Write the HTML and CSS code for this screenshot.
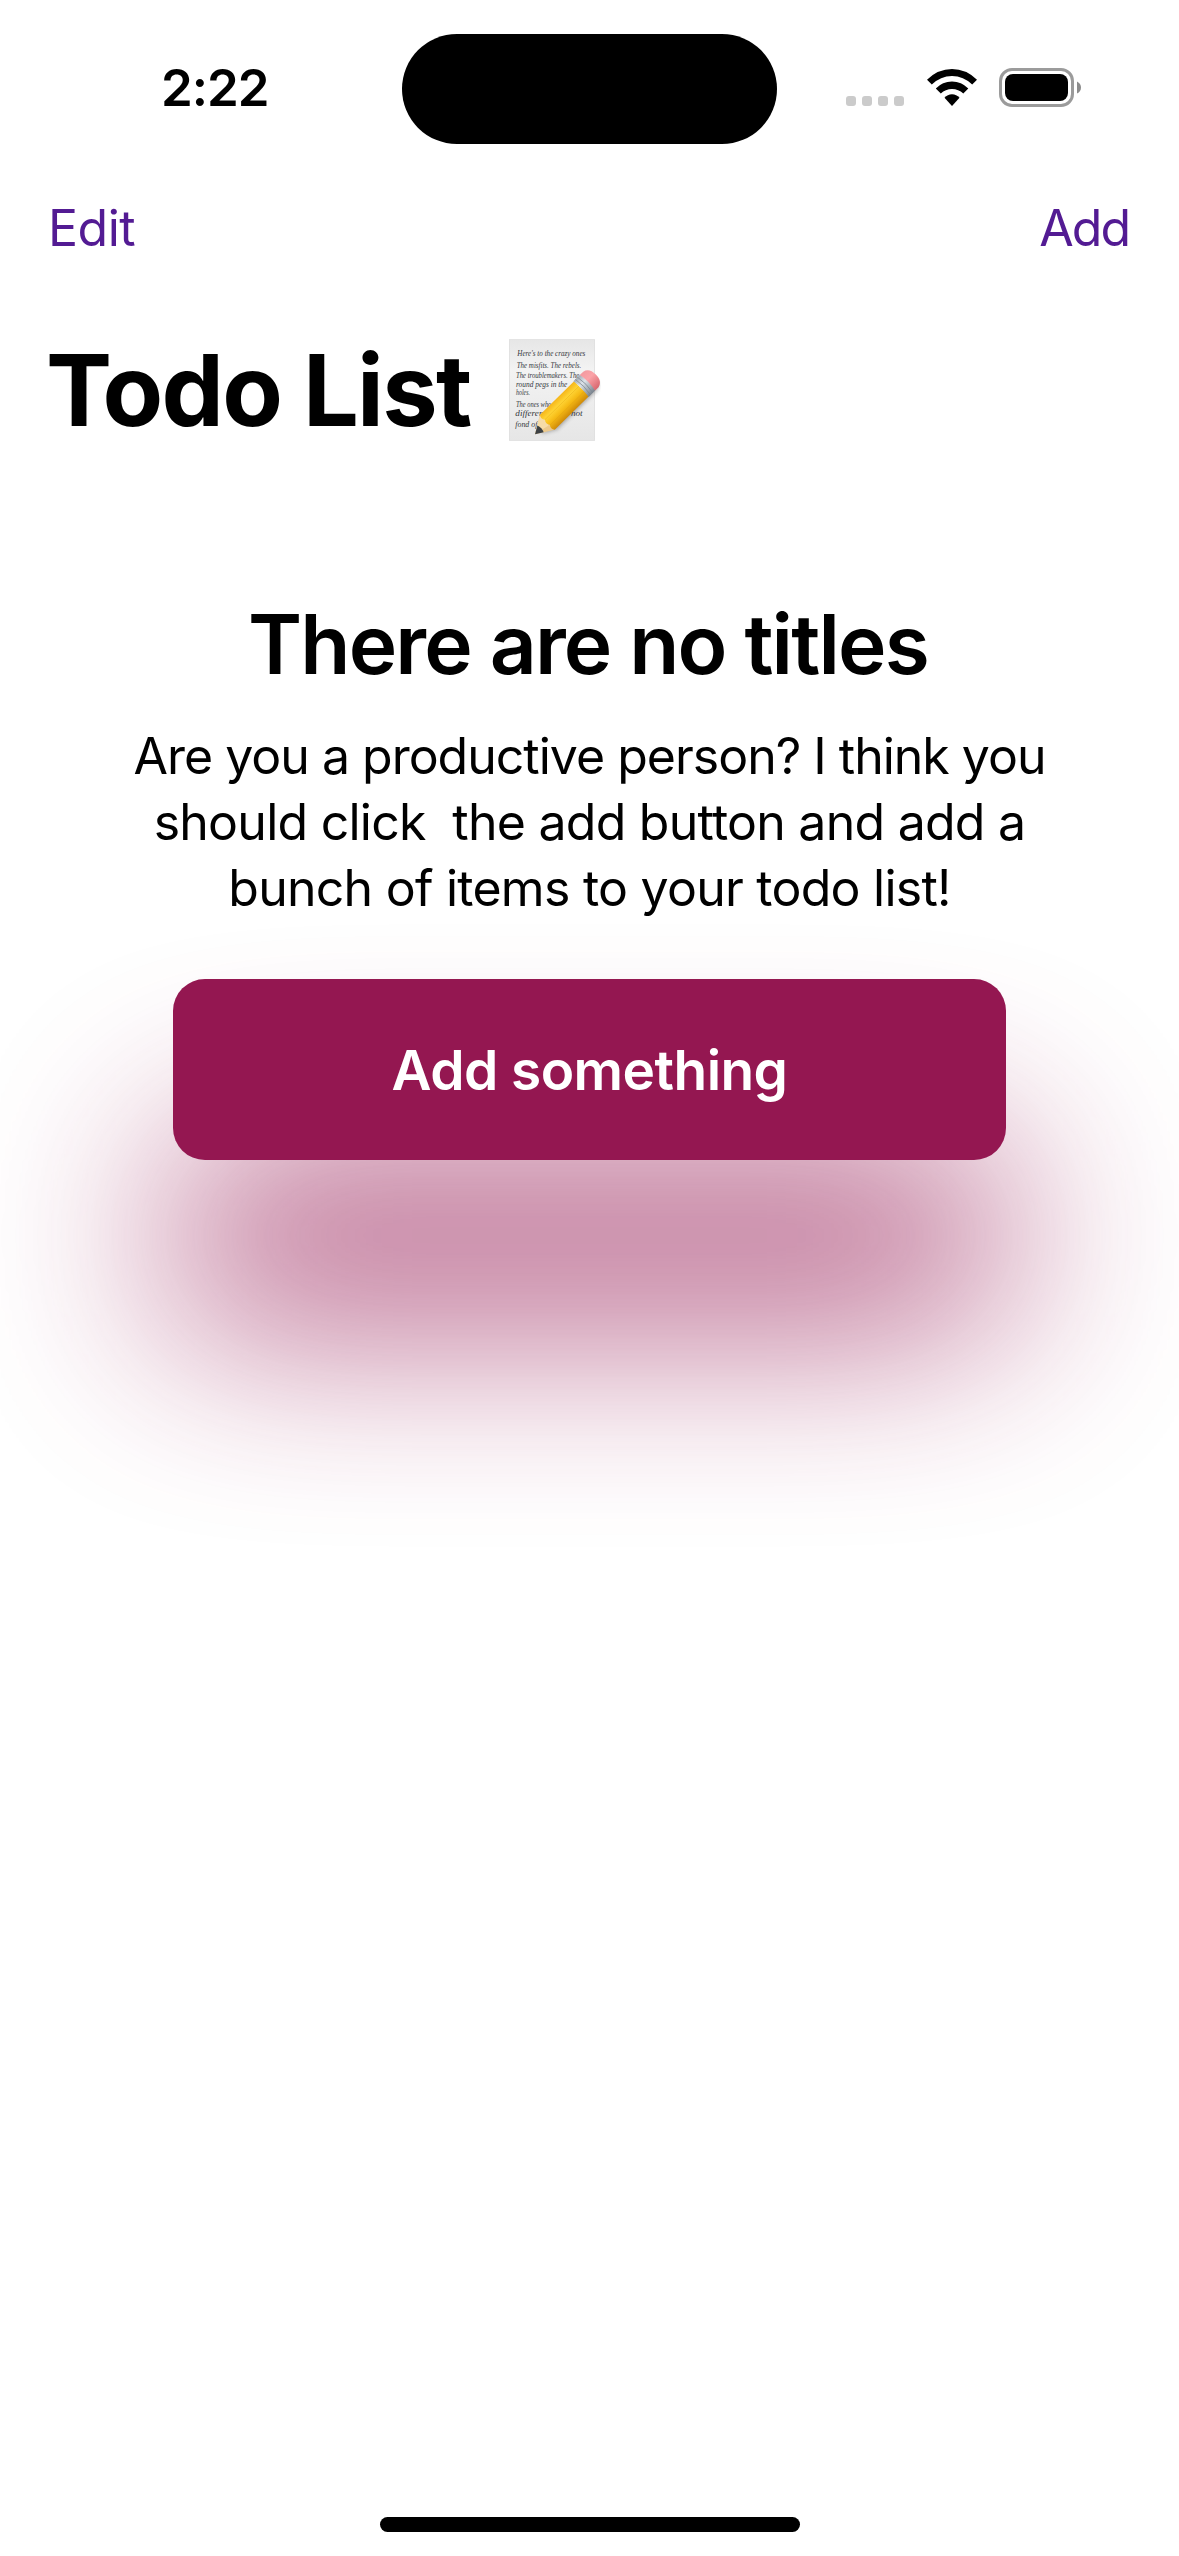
FILE: index.html
```html
<!DOCTYPE html>
<html lang="en">
<head>
<meta charset="utf-8">
<title>Todo List</title>
<link rel="stylesheet" href="styles.css">
</head>
<body>
<div class="screen">
  <header class="status-bar">
    <div class="clock"><span>2:22</span></div>
    <div class="island"></div>
    <div class="indicators">
      <div class="cellular"><i></i><i></i><i></i><i></i></div>
      <svg class="wifi" viewBox="0 0 50 37" width="50" height="37">
        <path d="M0 10.700Q11 0 25 0T50 10.700L45.200 15.600Q36.500 7 25 7T4.800 15.600Z"/>
        <path d="M8.800 19.600Q15.500 12.600 25 12.600T41.300 19.600L36.300 24.600Q31.500 20 25 20T13.800 24.600Z"/>
        <path d="M17.500 28.800Q20.500 25.300 25 25.300T32.500 28.800L25 37Z"/>
      </svg>
      <svg class="battery" viewBox="0 0 82 39" width="82" height="39">
        <rect x="1.500" y="1.500" width="72" height="36" rx="11.500" fill="none" stroke="#9b9b9b" stroke-width="3"/>
        <rect x="6" y="6" width="63" height="27" rx="8"/>
        <path d="M78 13.500Q82 15.500 82 19.500T78 25.500Z" fill="#8c8c8c"/>
      </svg>
    </div>
  </header>

  <nav class="nav-bar">
    <a class="nav-link edit">Edit</a>
    <a class="nav-link add">Add</a>
  </nav>

  <h1 class="title">
    <span class="title-text">Todo List</span>
    <svg class="memo" viewBox="57 58 276 306" width="92" height="102">
      <defs>
        <linearGradient id="paper" x1="0" y1="0" x2="0" y2="1">
          <stop offset="0" stop-color="#e6e6e6"/><stop offset=".3" stop-color="#f3f3f3"/><stop offset="1" stop-color="#e6e6e6"/>
        </linearGradient>
        <linearGradient id="wood" x1="0" y1="0" x2="0" y2="1">
          <stop offset="0" stop-color="#f5b51a"/><stop offset=".3" stop-color="#ffd434"/><stop offset=".62" stop-color="#f5b914"/><stop offset="1" stop-color="#cf8a08"/>
        </linearGradient>
        <linearGradient id="metal" x1="0" y1="0" x2="0" y2="1">
          <stop offset="0" stop-color="#a2aab3"/><stop offset=".35" stop-color="#dde4ea"/><stop offset="1" stop-color="#79838d"/>
        </linearGradient>
        <linearGradient id="rubber" x1="0" y1="0" x2="0" y2="1">
          <stop offset="0" stop-color="#f39aa0"/><stop offset=".4" stop-color="#fba3a8"/><stop offset="1" stop-color="#d8676f"/>
        </linearGradient>
        <filter id="soft" x="-20%" y="-50%" width="140%" height="200%"><feGaussianBlur stdDeviation="5"/></filter>
      </defs>
      <rect x="58" y="60" width="256" height="302" fill="url(#paper)" stroke="#dadada" stroke-width="2"/>
      <g class="handwriting">
        <text x="82" y="109" textLength="204" lengthAdjust="spacingAndGlyphs">Here's to the crazy ones</text>
        <text x="80" y="144" textLength="194" lengthAdjust="spacingAndGlyphs">The misfits. The rebels.</text>
        <text x="78" y="176" textLength="190" lengthAdjust="spacingAndGlyphs">The troublemakers. The</text>
        <text x="78" y="203" textLength="154" lengthAdjust="spacingAndGlyphs">round pegs in the</text>
        <text x="78" y="227" textLength="42" lengthAdjust="spacingAndGlyphs">holes.</text>
        <text x="78" y="262" textLength="106" lengthAdjust="spacingAndGlyphs">The ones who</text>
        <text x="76" y="290" textLength="202" lengthAdjust="spacingAndGlyphs">differently and not</text>
        <text x="76" y="323" textLength="66" lengthAdjust="spacingAndGlyphs">fond of</text>
      </g>
      <g transform="translate(135 344) rotate(-44.500) scale(1.040 1.170)">
        <path d="M10 8L55 30H205Q236 30 238 10V4Z" fill="#333" opacity=".42" filter="url(#soft)"/>
        <path d="M0 0L50-27V27Z" fill="#ecc98c"/>
        <path d="M0 0L50-27L54-8L46 8Z" fill="#f6dca8"/>
        <path d="M0 0L23-12Q28 0 22 12Z" fill="#3d4144"/>
        <path d="M50-27H188V27H50Q42 18 50 9Q42 0 50-9Q42-18 50-27Z" fill="url(#wood)"/>
        <path d="M50-9H188M50 10H188" stroke="#d99a10" stroke-width="1.500" opacity=".55"/>
        <path d="M186-28H213Q219 0 213 28H186Q192 0 186-28Z" fill="url(#metal)"/>
        <path d="M194-28Q200 0 194 28M203-28Q209 0 203 28" fill="none" stroke="#7c8791" stroke-width="2"/>
        <path d="M212-28H226Q246-24 246 0T226 28H212Q219 0 212-28Z" fill="url(#rubber)"/>
      </g>
    </svg>
  </h1>

  <main class="empty-state">
    <h2 class="headline">There are no titles</h2>
    <p class="message"><span class="line l1">Are you a productive person? I think you</span> <span class="line l2">should click&nbsp; the add button and add a</span> <span class="line l3">bunch of items to your todo list!</span></p>
    <button class="cta"><span>Add something</span></button>
  </main>

  <footer class="home"><div class="home-indicator"></div></footer>
</div>
</body>
</html>
```
FILE: styles.css
```css
* { box-sizing: border-box; }

body {
  margin: 0;
  background: #fff;
  color: #000;
  font-family: Inter, "Liberation Sans", sans-serif;
}

.screen {
  display: flex;
  flex-direction: column;
  width: 1179px;
  height: 2556px;
  overflow: hidden;
}

.status-bar {
  display: grid;
  grid-template-columns: 402px 375px 402px;
  height: 177px;
  padding-top: 34px;
}

.clock {
  height: 110px;
  padding-left: 161px;
  font-size: 51px;
  font-weight: 600;
  line-height: 108px;
  letter-spacing: -1px;
}

.island {
  height: 110px;
  border-radius: 55px;
  background: #000;
}

.indicators {
  display: flex;
  align-items: flex-start;
  padding: 34px 0 0 69px;
}

.cellular {
  display: flex;
  gap: 6px;
  margin: 28px 23px 0 0;
}

.cellular i {
  width: 10px;
  height: 10px;
  border-radius: 3px;
  background: #cbcbcb;
}

.wifi { margin: 1px 22px 0 0; }

.nav-bar {
  display: flex;
  justify-content: space-between;
  height: 132px;
  padding: 0 50px 0 48px;
}

.nav-link {
  color: #531b93;
  font-size: 50px;
  line-height: 102px;
}

.edit { letter-spacing: -0.5px; }
.add { letter-spacing: -2px; }

.title {
  display: flex;
  height: 156px;
  margin: 0;
  padding-left: 46px;
  font-size: 99px;
  font-weight: 700;
  line-height: 120px;
}

.title-text {
  width: 463px;
  padding-top: 21px;
  letter-spacing: -1.75px;
  white-space: nowrap;
}

.memo { margin-top: 30px; }

.handwriting {
  fill: #34383c;
  font-family: "Liberation Serif", serif;
  font-size: 26px;
  font-style: italic;
  font-weight: 400;
}

.empty-state {
  display: flex;
  flex-direction: column;
  align-items: center;
  padding-top: 130px;
}

.headline {
  margin: 0;
  padding-right: 3px;
  font-size: 82px;
  font-weight: 600;
  line-height: 100px;
  letter-spacing: -1.85px;
  white-space: nowrap;
}

.message {
  margin: 28px 0 0;
  font-size: 50px;
  line-height: 66px;
  text-align: center;
}

.line {
  display: block;
  white-space: nowrap;
}

.l1 { letter-spacing: -1px; }
.l2 { letter-spacing: -0.75px; }
.l3 { letter-spacing: -0.75px; }

.cta {
  position: relative;
  width: 833px;
  height: 181px;
  margin-top: 58px;
  padding: 0;
  border: 0;
  border-radius: 32px;
  background: #941751;
  color: #fff;
  font: 600 55px/182px Inter, sans-serif;
  letter-spacing: -0.55px;
}

/* coloured glow below the button */
.cta::before {
  content: "";
  position: absolute;
  z-index: -1;
  inset: 0;
  border-radius: 30px;
  background: #941751;
  opacity: 0.7;
  filter: blur(100px);
  transform: translateY(166px);
}

.home {
  margin-top: auto;
  padding-bottom: 24px;
}

.home-indicator {
  width: 420px;
  height: 15px;
  margin: 0 auto;
  border-radius: 8px;
  background: #000;
}
```
